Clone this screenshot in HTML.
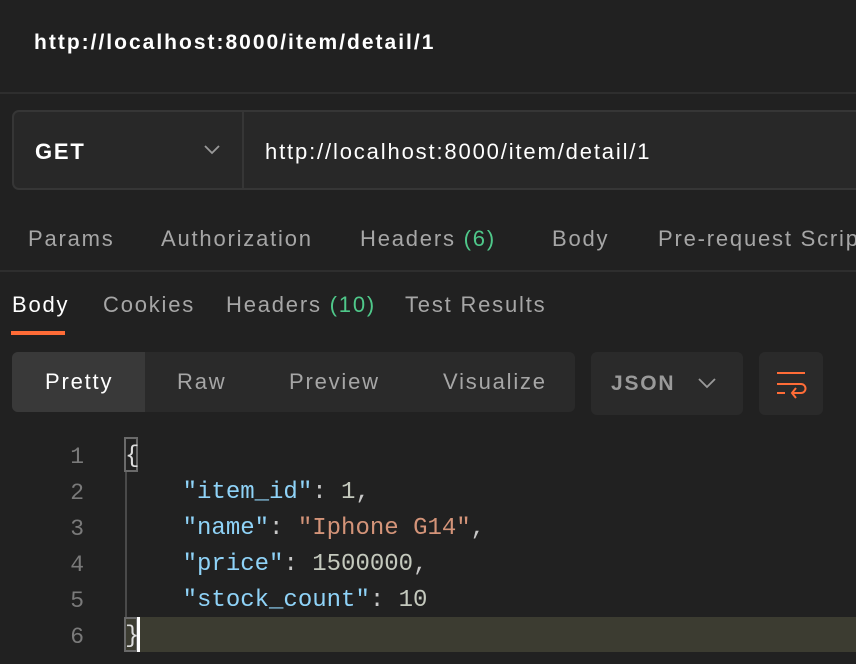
<!DOCTYPE html>
<html><head><meta charset="utf-8"><style>
*{margin:0;padding:0;box-sizing:border-box}
body{width:856px;height:664px;background:#212121;font-family:"Liberation Sans",sans-serif;position:relative;overflow:hidden;color:#a6a6a6}
.a{position:absolute;white-space:nowrap;letter-spacing:1.8px}
.mono{font-family:"Liberation Mono",monospace;font-size:24px;letter-spacing:0}
</style></head><body>
<div class="a" style="left:34px;top:31px;font-size:21px;font-weight:bold;color:#fff;letter-spacing:2px">http://localhost:8000/item/detail/1</div>
<div class="a" style="left:0;top:92px;width:856px;height:2px;background:#2e2e2e"></div>
<div class="a" style="left:12px;top:110px;width:860px;height:80px;background:#282828;border:2px solid #363636;border-radius:7px"></div>
<div class="a" style="left:242px;top:112px;width:2px;height:76px;background:#363636"></div>
<div class="a" style="left:35px;top:139px;font-size:22px;font-weight:bold;color:#fff">GET</div>
<svg class="a" style="left:203px;top:143px" width="18" height="12"><path d="M2 3 L9 10 L16 3" stroke="#9a9a9a" stroke-width="1.8" fill="none"/></svg>
<div class="a" style="left:265px;top:139px;font-size:22px;color:#fff;letter-spacing:1.85px">http://localhost:8000/item/detail/1</div>
<div class="a" style="left:28px;top:226px;font-size:22px">Params</div>
<div class="a" style="left:161px;top:226px;font-size:22px">Authorization</div>
<div class="a" style="left:360px;top:226px;font-size:22px">Headers <span style="color:#4fc88a">(6)</span></div>
<div class="a" style="left:552px;top:226px;font-size:22px">Body</div>
<div class="a" style="left:658px;top:226px;font-size:22px">Pre-request Script</div>
<div class="a" style="left:0;top:270px;width:856px;height:2px;background:#2e2e2e"></div>
<div class="a" style="left:12px;top:292px;font-size:22px;color:#fff">Body</div>
<div class="a" style="left:103px;top:292px;font-size:22px">Cookies</div>
<div class="a" style="left:226px;top:292px;font-size:22px">Headers <span style="color:#4fc88a">(10)</span></div>
<div class="a" style="left:405px;top:292px;font-size:22px">Test Results</div>
<div class="a" style="left:11px;top:331px;width:54px;height:4px;background:#ff6c37"></div>
<div class="a" style="left:12px;top:352px;width:563px;height:60px;background:#2a2a2a;border-radius:6px"></div>
<div class="a" style="left:12px;top:352px;width:133px;height:60px;background:#393939;border-radius:6px 0 0 6px"></div>
<div class="a" style="left:45px;top:369px;font-size:22px;color:#fff">Pretty</div>
<div class="a" style="left:177px;top:369px;font-size:22px">Raw</div>
<div class="a" style="left:289px;top:369px;font-size:22px">Preview</div>
<div class="a" style="left:443px;top:369px;font-size:22px">Visualize</div>
<div class="a" style="left:591px;top:352px;width:152px;height:63px;background:#2a2a2a;border-radius:6px"></div>
<div class="a" style="left:611px;top:372px;font-size:21px;font-weight:bold;color:#9a9a9a">JSON</div>
<svg class="a" style="left:697px;top:377px" width="20" height="12"><path d="M2 2 L10 10 L18 2" stroke="#9a9a9a" stroke-width="1.8" fill="none"/></svg>
<div class="a" style="left:759px;top:352px;width:64px;height:63px;background:#2a2a2a;border-radius:6px"></div>
<svg class="a" style="left:775px;top:370px" width="32" height="30"><g stroke="#ff6c37" stroke-width="2" fill="none"><path d="M2 3H30M2 14H26a4.5 4.5 0 0 1 0 9H17M2 23H10M21 18l-4 5 4 5"/></g></svg>
<div class="a" style="left:124px;top:617px;width:732px;height:35px;background:#3c3c31"></div>
<div class="a" style="left:125px;top:470px;width:2px;height:148px;background:#4a4a4a"></div>
<div class="a" style="left:124px;top:437px;width:14px;height:35px;border:2px solid #6a6a6a"></div>
<div class="a" style="left:124px;top:617px;width:14px;height:35px;border:2px solid #6a6a6a"></div>
<div class="a" style="left:137px;top:617px;width:3px;height:35px;background:#fff"></div>
<div class="a mono" style="left:40px;top:439px;width:44px;text-align:right;line-height:36px;color:#7a7a7a;font-size:23px">1<br>2<br>3<br>4<br>5<br>6</div>
<div class="a mono" style="left:125px;top:439px;line-height:36px;color:#c8c8c8"><span style="color:#ddd">{</span><br>&nbsp;&nbsp;&nbsp;&nbsp;<span style="color:#8fd3f8">"item_id"</span>: <span style="color:#c4c9bd">1</span>,<br>&nbsp;&nbsp;&nbsp;&nbsp;<span style="color:#8fd3f8">"name"</span>: <span style="color:#d49479">"Iphone G14"</span>,<br>&nbsp;&nbsp;&nbsp;&nbsp;<span style="color:#8fd3f8">"price"</span>: <span style="color:#c4c9bd">1500000</span>,<br>&nbsp;&nbsp;&nbsp;&nbsp;<span style="color:#8fd3f8">"stock_count"</span>: <span style="color:#c4c9bd">10</span><br><span style="color:#ddd">}</span></div>
</body></html>
